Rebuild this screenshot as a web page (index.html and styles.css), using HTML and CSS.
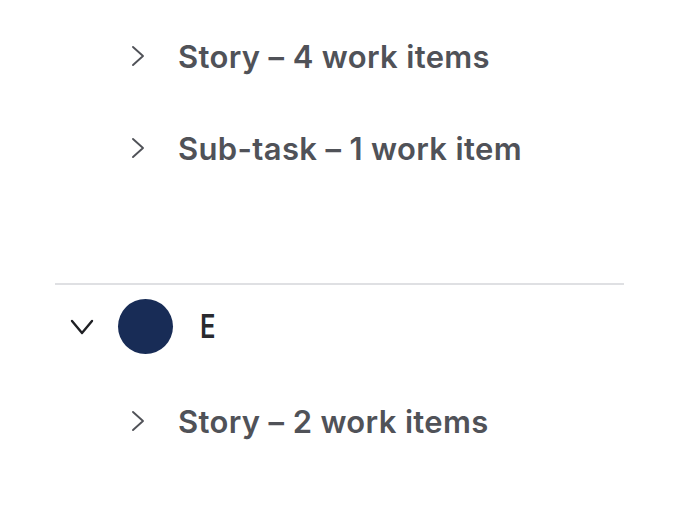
FILE: index.html
```html
<!DOCTYPE html>
<html lang="en">
<head>
<meta charset="utf-8">
<link rel="stylesheet" href="styles.css">
</head>
<body>
<div class="board">
  <div class="group group-top">
    <div class="item">
      <svg class="chev-right" width="14" height="22" viewBox="0 0 14 22"><polyline points="2,2 12,11 2,20" fill="none" stroke="currentColor" stroke-width="1.9" stroke-linecap="round" stroke-linejoin="round"/></svg>
      <span class="label">Story – 4 work items</span>
    </div>
    <div class="item">
      <svg class="chev-right" width="14" height="22" viewBox="0 0 14 22"><polyline points="2,2 12,11 2,20" fill="none" stroke="currentColor" stroke-width="1.9" stroke-linecap="round" stroke-linejoin="round"/></svg>
      <span class="label">Sub-task – 1 work item</span>
    </div>
  </div>
  <div class="group">
    <div class="group-header">
      <svg class="chev-down" width="24" height="16" viewBox="0 0 24 16"><polyline points="2,2 12,14 22,2" fill="none" stroke="currentColor" stroke-width="2.4" stroke-linecap="round" stroke-linejoin="round"/></svg>
      <span class="avatar"></span>
      <span class="assignee">E</span>
    </div>
    <div class="item">
      <svg class="chev-right" width="14" height="22" viewBox="0 0 14 22"><polyline points="2,2 12,11 2,20" fill="none" stroke="currentColor" stroke-width="1.9" stroke-linecap="round" stroke-linejoin="round"/></svg>
      <span class="label">Story – 2 work items</span>
    </div>
  </div>
</div>
</body>
</html>
```
FILE: styles.css
```css
html, body {
  margin: 0;
  padding: 0;
  background: #ffffff;
}
body {
  font-family: Inter, "Noto Sans", sans-serif;
}
.board {
  width: 569px;
  margin-left: 55px;
  padding-top: 10px;
}
.group-top {
  padding-bottom: 89px;
  border-bottom: 2px solid #dfe0e3;
}
.item {
  display: flex;
  align-items: center;
  height: 92px;
  padding-left: 76px;
  color: #505258;
}
.chev-right {
  flex: none;
  color: #505258;
}
.label {
  margin-left: 33px;
  font-size: 31px;
  font-weight: 600;
  letter-spacing: 0.35px;
  white-space: nowrap;
}
.group-header {
  display: flex;
  align-items: center;
  padding-top: 14px;
  padding-bottom: 21px;
  padding-left: 15px;
}
.chev-down {
  flex: none;
  color: #1f2024;
}
.avatar {
  flex: none;
  width: 55px;
  height: 55px;
  border-radius: 50%;
  background: #182c56;
  margin-left: 24px;
}
.assignee {
  margin-left: 27px;
  font-size: 32px;
  font-weight: 600;
  color: #292a2e;
  transform: scaleX(0.8);
  transform-origin: left center;
}
```
